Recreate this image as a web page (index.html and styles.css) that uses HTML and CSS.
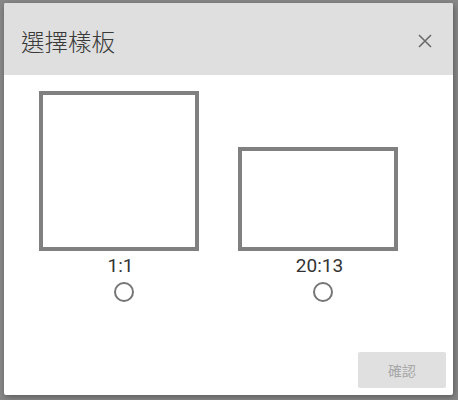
FILE: index.html
```html
<!DOCTYPE html>
<html lang="zh-Hant">
<head>
<meta charset="utf-8">
<link rel="stylesheet" href="styles.css">
</head>
<body>
<div class="backdrop">
  <div class="dialog">
    <div class="header">
      <h1 class="title">選擇樣板</h1>
      <svg class="close" width="14" height="14" viewBox="0 0 14 14">
        <path d="M1 1 L13 13 M13 1 L1 13" stroke="#6b6b6b" stroke-width="1.6" fill="none"/>
      </svg>
    </div>
    <div class="body">
      <div class="option">
        <div class="frame square"></div>
        <div class="label">1:1</div>
        <div class="radio-wrap"><span class="radio"></span></div>
      </div>
      <div class="option">
        <div class="frame wide"></div>
        <div class="label">20:13</div>
        <div class="radio-wrap"><span class="radio"></span></div>
      </div>
    </div>
    <div class="footer">
      <button class="confirm" disabled>確認</button>
    </div>
  </div>
</div>
</body>
</html>
```

FILE: styles.css
```css
html, body {
  margin: 0;
  padding: 0;
}
body {
  width: 458px;
  height: 400px;
  background: #888888;
  overflow: hidden;
  font-family: Roboto, "Noto Sans CJK TC", sans-serif;
}
.backdrop {
  box-sizing: border-box;
  width: 458px;
  height: 400px;
  padding: 3px 5px 5px 4px;
  display: flex;
}
.dialog {
  flex: 1;
  background: #ffffff;
  border-radius: 2px;
  display: flex;
  flex-direction: column;
  overflow: hidden;
  box-shadow: 1px 2px 6px rgba(0, 0, 0, 0.35);
}
.header {
  height: 72px;
  flex: none;
  background: #dfdfdf;
  display: flex;
  align-items: center;
  justify-content: space-between;
  padding: 4px 21px 0 17px;
  box-sizing: border-box;
}
.title {
  margin: 0;
  font-family: "Noto Sans CJK TC", sans-serif;
  font-weight: 300;
  font-size: 23.5px;
  line-height: 30px;
  color: #3a3a3a;
}
.close {
  display: block;
}
.body {
  display: flex;
  align-items: flex-end;
  gap: 39px;
  padding: 16px 0 0 35px;
}
.option {
  width: 160px;
  display: flex;
  flex-direction: column;
  align-items: center;
}
.frame {
  box-sizing: border-box;
  width: 160px;
  border: 4px solid #808080;
  background: #fff;
}
.square { height: 160px; }
.wide { height: 104px; }
.label {
  margin-top: 4px;
  padding-left: 3px;
  font-family: Roboto, sans-serif;
  font-size: 19px;
  line-height: 21px;
  color: #333333;
}
.radio-wrap {
  margin-top: 6px;
  padding-left: 10px;
  height: 20px;
}
.radio {
  display: block;
  box-sizing: border-box;
  width: 20px;
  height: 20px;
  border: 2px solid #767676;
  border-radius: 50%;
}
.footer {
  margin-top: auto;
  display: flex;
  justify-content: flex-end;
  padding: 0 7px 7px 0;
}
.confirm {
  width: 88px;
  height: 36px;
  border: none;
  border-radius: 2px;
  background: #e0e0e0;
  color: #a8a8a8;
  font-family: "Noto Sans CJK TC", sans-serif;
  font-size: 14px;
  padding: 0;
}
```
